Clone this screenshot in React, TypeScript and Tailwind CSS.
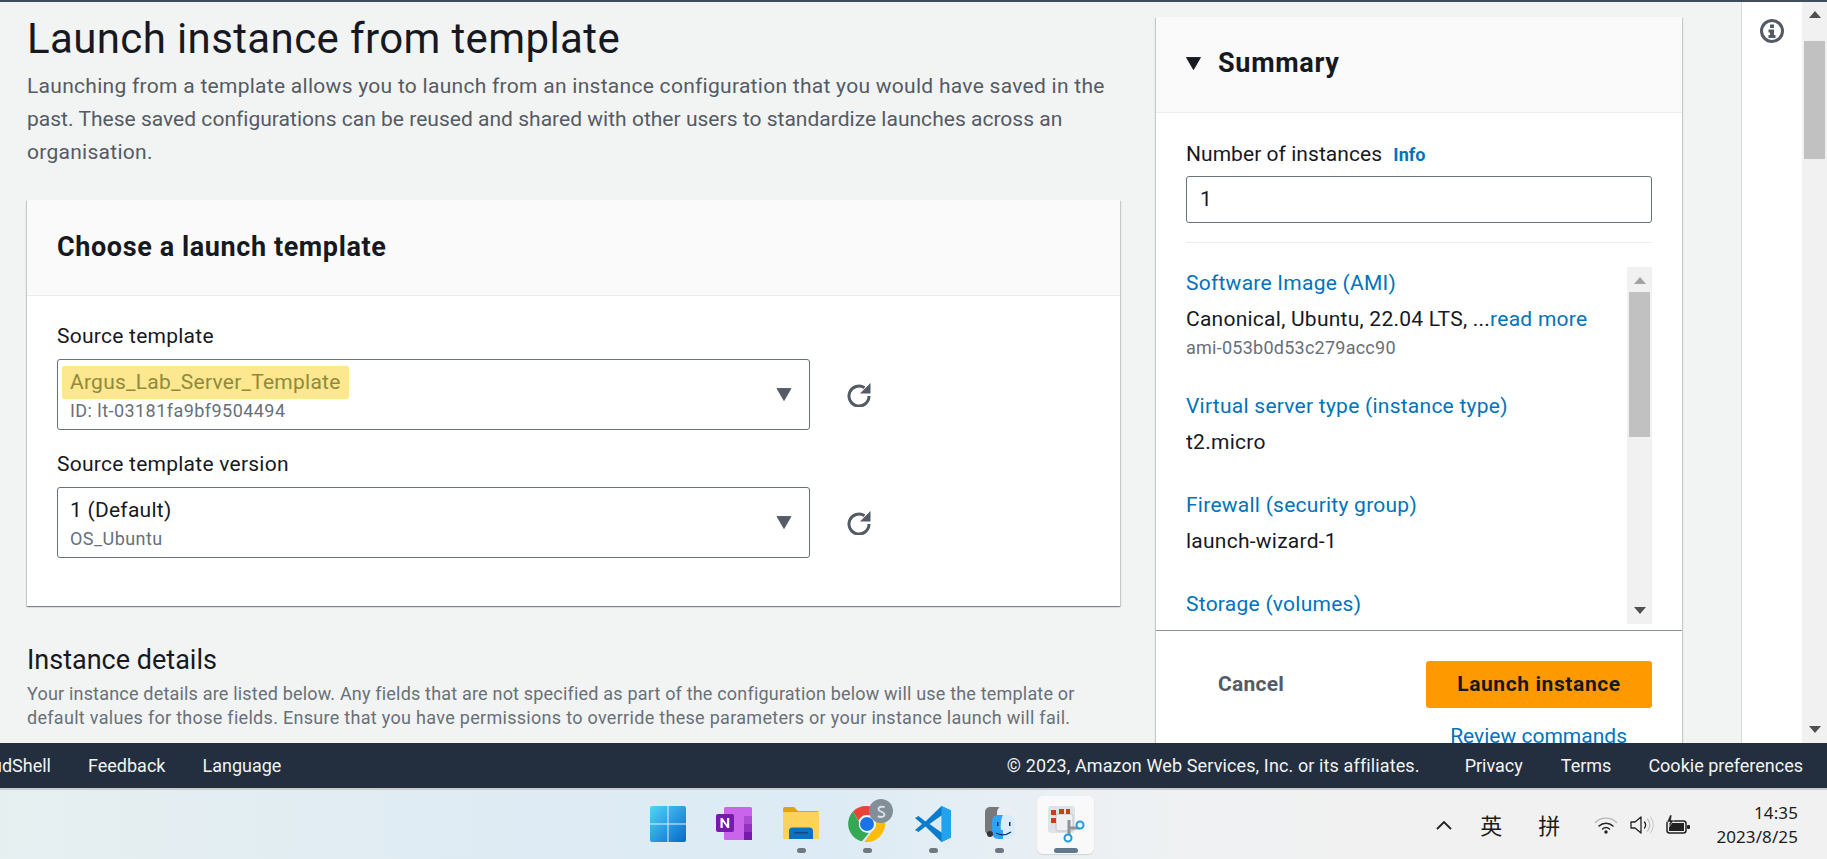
import { ReactNode } from "react";

const ember = "font-['Roboto','Noto_Sans',sans-serif] tracking-[0.25px]";

function Triangle({ className }: { className?: string }) {
  return (
    <svg viewBox="0 0 16 14" className={className}>
      <path d="M0.500 0.500h15L8 13.500z" fill="currentColor" stroke="currentColor" strokeLinejoin="round" />
    </svg>
  );
}

function RefreshIcon() {
  return (
    <svg viewBox="0 0 25 24" className="w-[25px] h-[24px] text-[#545b64]" fill="none" stroke="currentColor" strokeWidth="3">
      <path d="M22 13a10 10 0 1 1-4.500-8.300" />
      <path d="M23.500 0v10.500H13z" fill="currentColor" stroke="none" />
    </svg>
  );
}

function TemplateSelect({ value, sub, marked }: { value: string; sub: string; marked?: boolean }) {
  return (
    <div className="flex items-center">
      <div className="w-[753px] h-[71px] border-[1.5px] border-[#687078] rounded-[3px] bg-white flex items-center pl-[12px] pr-[17px]">
        <div className="flex-1 min-w-0">
          <div className="h-[33px] leading-[33px] text-[21px] text-[#16191f]">
            {marked ? (
              <span className="inline-block -ml-[8px] pl-[8px] pr-[8px] bg-[#fde78f] rounded-[2px] text-[#8f8a3c]">{value}</span>
            ) : (
              value
            )}
          </div>
          <div className="h-[24px] leading-[24px] text-[18px] tracking-[0.45px] text-[#687078]">{sub}</div>
        </div>
        <Triangle className="w-[16px] h-[13px] text-[#545b64]" />
      </div>
      <div className="ml-[37px]">
        <RefreshIcon />
      </div>
    </div>
  );
}

function SummaryItem({ title, value, more, sub }: { title: string; value?: string; more?: string; sub?: string }) {
  return (
    <div className="mb-[30px]">
      <div className="text-[21px] leading-[33px] text-[#0073bb]">{title}</div>
      {value && (
        <div className="mt-[3px] text-[21px] leading-[33px] text-[#16191f]">
          {value}
          {more && <span className="text-[#0073bb]">{more}</span>}
        </div>
      )}
      {sub && <div className="text-[18px] leading-[24px] text-[#687078]">{sub}</div>}
    </div>
  );
}

function ScrollArrow({ dir, className }: { dir: "up" | "down"; className: string }) {
  return (
    <svg viewBox="0 0 12 7" className={`w-[12px] h-[7px] ${className}`}>
      <path d={dir === "up" ? "M6 0l6 7H0z" : "M0 0h12L6 7z"} fill="currentColor" />
    </svg>
  );
}

function TaskbarTile({ children, running, active }: { children: ReactNode; running?: boolean; active?: boolean }) {
  return (
    <div className="w-[66.3px] h-[70px] flex flex-col items-center pt-[16px] relative">
      {active && <div className="absolute left-[4px] top-[6px] w-[57px] h-[58px] rounded-[6px] bg-[#f9f9f9] shadow-[0_1px_1px_rgba(0,0,0,0.12)]" />}
      <div className="relative w-[36px] h-[36px]">{children}</div>
      {running && <div className="absolute left-[29px] top-[58px] w-[9px] h-[5px] rounded-full bg-[#6f7780]" />}
      {active && <div className="absolute left-[21px] top-[58px] w-[24px] h-[5px] rounded-full bg-[#5f7a8e]" />}
    </div>
  );
}

function WindowsLogo() {
  return (
    <svg viewBox="0 0 36 36" className="w-full h-full">
      <defs>
        <linearGradient id="win" x1="0" y1="0" x2="1" y2="1">
          <stop offset="0" stopColor="#52d3fb" />
          <stop offset="1" stopColor="#0669c9" />
        </linearGradient>
      </defs>
      <rect width="36" height="36" rx="2" fill="url(#win)" />
      <path d="M17.500 0h1v36h-1zM0 17.500h36v1H0z" fill="#dff1fa" />
    </svg>
  );
}

function OneNoteLogo() {
  return (
    <svg viewBox="0 0 36 36" className="w-full h-full">
      <rect x="8" y="1" width="28" height="33" rx="1.500" fill="#ca64ea" />
      <rect x="28" y="10" width="8" height="8" fill="#ae4bd5" />
      <rect x="28" y="18" width="8" height="8" fill="#9332bf" />
      <rect x="28" y="26" width="8" height="8" fill="#7719aa" />
      <rect x="0" y="8" width="18" height="18" rx="2" fill="#7719aa" />
      <path d="M4.500 22V12h2l4.500 6.500V12h2.200v10h-2L6.700 15.500V22z" fill="#fff" />
    </svg>
  );
}

function FolderLogo() {
  return (
    <svg viewBox="0 0 36 36" className="w-full h-full">
      <path d="M0 3a2 2 0 0 1 2-2h9l4 4h19a2 2 0 0 1 2 2v6H0z" fill="#e0a50c" />
      <path d="M0 6h36v26a1 1 0 0 1-1 1H1a1 1 0 0 1-1-1z" fill="#fdd258" />
      <path d="M6 33V25a3.500 3.500 0 0 1 3.500-3.500h17A3.500 3.500 0 0 1 30 25v8z" fill="#0a72c4" />
      <rect x="11" y="26" width="14" height="1.500" fill="#0d4a80" />
    </svg>
  );
}

function ChromeLogo() {
  return (
    <svg viewBox="0 0 36 36" className="w-full h-full overflow-visible">
      <path d="M18 0a18 18 0 0 1 15.600 9H18a9 9 0 0 0-8.400 5.800L4 5.500A18 18 0 0 1 18 0z" fill="#ea4335" />
      <path d="M4 5.500l6 10.500a9 9 0 0 0 10 10.800L13 35.300A18 18 0 0 1 4 5.500z" fill="#34a853" />
      <path d="M33.600 9A18 18 0 0 1 15.500 35.800L22.500 26A9 9 0 0 0 25 12.500z" fill="#fbbc04" />
      <circle cx="18" cy="18" r="8" fill="#fff" />
      <circle cx="18" cy="18" r="7" fill="#1a73e8" />
      <circle cx="32" cy="5" r="12" fill="#828f99" />
      <path d="M35.500 1.500c-1-1-5.500-1.500-6 1.500s6 2.500 6 5.500-5 3-6.500 1.500" fill="none" stroke="#dce2e6" strokeWidth="1.800" />
    </svg>
  );
}

function VsCodeLogo() {
  return (
    <svg viewBox="0 0 36 36" className="w-full h-full">
      <path d="M26.500 0L36 4.500v27L26.500 36l-16-15.500-7 5.500L0 24l7-6-7-6 3.500-2 7 5.500z" fill="#0a7ccb" />
      <path d="M26.500 0L36 4.500v27L26.500 36V0z" fill="#21a4f0" />
      <path d="M26.500 9.500v17L14.500 18z" fill="#ffffff" fillOpacity="0.85" />
    </svg>
  );
}

function FinderLogo() {
  return (
    <svg viewBox="0 0 36 36" className="w-full h-full">
      <rect x="3" y="1" width="17" height="28" rx="5" fill="#77787a" />
      <rect x="15" y="1" width="18" height="30" rx="5" fill="#eceef2" />
      <path d="M16 9h5c-1.500 4-2.500 8-2 15h2v9h-5a6 6 0 0 1-6-6V15a6 6 0 0 1 6-6z" fill="#2ea3f7" />
      <path d="M21 9h6a6 6 0 0 1 6 6v12a6 6 0 0 1-6 6h-6v-9h-2c-.5-7 .5-11 2-15z" fill="#d8edfb" />
      <path d="M14 27c4.500 2.500 10 2.500 15-1" fill="none" stroke="#10305e" strokeWidth="1.200" />
      <rect x="15" y="16" width="1.500" height="4" fill="#10305e" />
      <rect x="27" y="16" width="1.500" height="4" fill="#10305e" />
      <circle cx="8" cy="28" r="3" fill="#333" />
    </svg>
  );
}

function SnipLogo() {
  return (
    <svg viewBox="0 0 36 36" className="w-full h-full overflow-visible">
      <rect x="0" y="0" width="27" height="27" rx="3" fill="#dfe2e6" />
      <rect x="8" y="8" width="17" height="17" rx="2" fill="#eef0f2" stroke="#c2c6ca" />
      <path d="M3 4h5v5H3zM11 3h5v5h-5zM18 3h4v5h-4zM3 12h5v5H3z" fill="#c93d1a" />
      <path d="M21 14v16M20 22h12" stroke="#8d949a" strokeWidth="3" fill="none" />
      <circle cx="32" cy="19" r="3.500" fill="#fff" stroke="#1e9be0" strokeWidth="2" />
      <circle cx="20" cy="32" r="3.500" fill="#fff" stroke="#1e9be0" strokeWidth="2" />
    </svg>
  );
}

function WifiIcon() {
  return (
    <svg viewBox="0 0 24 18" className="w-[24px] h-[18px]" fill="none" strokeLinecap="round">
      <path d="M1.500 6.500a15 15 0 0 1 21 0" stroke="#b5b5b5" strokeWidth="1.300" />
      <path d="M5 10a10 10 0 0 1 14 0" stroke="#222" strokeWidth="1.500" />
      <path d="M8.500 13a5.500 5.500 0 0 1 7 0" stroke="#222" strokeWidth="1.500" />
      <circle cx="12" cy="16" r="1.700" fill="#222" />
    </svg>
  );
}

function VolumeIcon() {
  return (
    <svg viewBox="0 0 24 20" className="w-[24px] h-[20px]" fill="none" strokeLinecap="round">
      <path d="M1 7v6h4l6 5V2L5 7z" stroke="#222" strokeWidth="1.300" strokeLinejoin="round" />
      <path d="M14.500 7a5 5 0 0 1 0 6" stroke="#222" strokeWidth="1.300" />
      <path d="M17.500 4a9 9 0 0 1 0 12" stroke="#bbb" strokeWidth="1.200" />
      <path d="M20.500 2a13 13 0 0 1 0 16" stroke="#ccc" strokeWidth="1.200" />
    </svg>
  );
}

function BatteryIcon() {
  return (
    <svg viewBox="0 0 24 20" className="w-[24px] h-[20px]">
      <rect x="1" y="6" width="19" height="12" rx="2.500" fill="none" stroke="#222" strokeWidth="1.500" />
      <rect x="3" y="8" width="15" height="8" fill="#222" />
      <rect x="21" y="10" width="3" height="4" rx="1" fill="#222" />
      <path d="M4 0L1 7h3l-1 5 5-7H5l1-5z" fill="#222" stroke="#f0f0f0" strokeWidth="0.500" />
    </svg>
  );
}

export default function App() {
  return (
    <div className={`w-[1827px] h-[859px] overflow-hidden flex flex-col ${ember}`}>
      <main className="h-[743px] flex overflow-hidden bg-[#f2f3f3] border-t-[2px] border-[#414d5c]">
        <div className="w-[1120px] pl-[27px] shrink-0">
          <h1 className="mt-[10px] text-[42px] leading-[54px] tracking-[0.38px] text-[#16191f]">Launch instance from template</h1>
          <p className="w-[1093px] mt-[4px] text-[21px] leading-[33px] tracking-[0.28px] text-[#545b64]">
            Launching from a template allows you to launch from an instance configuration that you would have saved in
            the{" "}
            <span className="tracking-[0.02px]">
              past. These saved configurations can be reused and shared with other users to standardize launches across an
            </span>{" "}
            organisation.
          </p>
          <section className="mt-[31px] w-[1093px] h-[406px] bg-white shadow-[0_1px_1px_rgba(0,28,36,0.3),1px_1px_1px_rgba(0,28,36,0.15),-1px_1px_1px_rgba(0,28,36,0.15)]">
            <div className="h-[96px] flex items-center pl-[30px] bg-[#fafafa] border-b border-[#eaeded]">
              <h2 className="text-[27px] font-bold tracking-[0.6px] text-[#16191f]">Choose a launch template</h2>
            </div>
            <div className="pl-[30px] pt-[24px]">
              <label className="block h-[39px] text-[21px] leading-[33px] text-[#16191f]">Source template</label>
              <TemplateSelect value="Argus_Lab_Server_Template" sub="ID: lt-03181fa9bf9504494" marked />
              <label className="block mt-[18px] h-[39px] text-[21px] leading-[33px] text-[#16191f]">Source template version</label>
              <TemplateSelect value="1 (Default)" sub="OS_Ubuntu" />
            </div>
          </section>
          <h2 className="mt-[36px] text-[27px] leading-[36px] tracking-normal text-[#16191f]">Instance details</h2>
          <p className="mt-[4px] w-[1093px] text-[18px] leading-[24px] tracking-[0.19px] text-[#687078]">
            Your instance details are listed below. Any fields that are not specified as part of the configuration below
            will use the template or{" "}
            <span className="tracking-[0.3px]">
              default values for those fields. Ensure that you have permissions to override these parameters or your
              instance launch will fail.
            </span>
          </p>
        </div>

        <aside className="ml-[36px] mt-[15px] w-[526px] h-[900px] shrink-0 bg-white shadow-[0_1px_1px_rgba(0,28,36,0.3),1px_1px_1px_rgba(0,28,36,0.15),-1px_1px_1px_rgba(0,28,36,0.15)]">
          <div className="h-[96px] pb-[2px] flex items-center pl-[30px] bg-[#fafafa] border-b border-[#eaeded]">
            <Triangle className="w-[15px] h-[13px] text-[#16191f]" />
            <h2 className="ml-[17px] text-[27px] font-bold tracking-[0.7px] text-[#16191f]">Summary</h2>
          </div>
          <div className="px-[30px]">
            <div className="pt-[25px] h-[63px] text-[21px] leading-[33px] tracking-[0.05px] text-[#16191f]">
              Number of instances <span className="ml-[6px] text-[18px] font-bold text-[#0073bb]">Info</span>
            </div>
            <div className="h-[47px] border-[1.5px] border-[#687078] rounded-[3px] pl-[13px] flex items-center text-[21px] text-[#16191f]">1</div>
            <div className="mt-[19px] h-px bg-[#eaeded]" />
            <div className="mt-[24px] h-[357px] flex overflow-hidden">
              <div className="flex-1 min-w-0">
                <SummaryItem title="Software Image (AMI)" value="Canonical, Ubuntu, 22.04 LTS, ..." more="read more" sub="ami-053b0d53c279acc90" />
                <SummaryItem title="Virtual server type (instance type)" value="t2.micro" />
                <SummaryItem title="Firewall (security group)" value="launch-wizard-1" />
                <SummaryItem title="Storage (volumes)" />
              </div>
              <div className="w-[25px] shrink-0 bg-[#f1f1f1] flex flex-col items-center pt-[10px] pb-[10px]">
                <ScrollArrow dir="up" className="text-[#a3a3a3]" />
                <div className="mt-[8px] w-[21px] h-[145px] bg-[#c1c1c1]" />
                <div className="flex-1" />
                <ScrollArrow dir="down" className="text-[#505050]" />
              </div>
            </div>
          </div>
          <div className="mt-[6px] border-t-[1.5px] border-[#879596] px-[30px]">
            <div className="mt-[30px] flex items-center">
              <span className="ml-[32px] text-[21px] font-bold text-[#545b64]">Cancel</span>
              <button className="ml-auto w-[226px] h-[47px] rounded-[3px] bg-[#ff9900] text-[21px] font-bold tracking-[0.6px] text-[#16191f]">Launch instance</button>
            </div>
            <div className="mt-[12px] pr-[25px] text-right text-[21px] leading-[33px] tracking-normal text-[#0073bb]">Review commands</div>
          </div>
        </aside>

        <div className="ml-[59px] w-[61px] shrink-0 bg-white border-l-[1.5px] border-[#d5dbdb] flex justify-center pt-[17px]">
          <svg viewBox="0 0 24 24" className="w-[24px] h-[24px] text-[#545b64]">
            <circle cx="12" cy="12" r="10.500" fill="none" stroke="currentColor" strokeWidth="3" />
            <rect x="10" y="5.500" width="4" height="3.500" fill="currentColor" />
            <path d="M8.500 10.500h5.500v5.500h1.500v3h-7v-3H10v-2.500H8.500z" fill="currentColor" />
          </svg>
        </div>
        <div className="w-[25px] shrink-0 bg-[#f1f1f1] flex flex-col items-center pt-[9px] pb-[10px]">
          <ScrollArrow dir="up" className="text-[#505050]" />
          <div className="mt-[23px] w-[21px] h-[118px] bg-[#c1c1c1]" />
          <div className="flex-1" />
          <ScrollArrow dir="down" className="text-[#505050]" />
        </div>
      </main>

      <footer className="h-[45px] shrink-0 flex items-center bg-[#232f3e] text-[18px] tracking-normal text-[#f2f3f3]">
        <div className="w-[51px] shrink-0 overflow-hidden flex justify-end whitespace-nowrap">CloudShell</div>
        <span className="ml-[37px]">Feedback</span>
        <span className="ml-[37px]">Language</span>
        <span className="ml-auto tracking-[0.12px]">© 2023, Amazon Web Services, Inc. or its affiliates.</span>
        <span className="ml-[45px]">Privacy</span>
        <span className="ml-[38px]">Terms</span>
        <span className="ml-[37px] mr-[24px]">Cookie preferences</span>
      </footer>

      <div className="h-[71px] shrink-0 flex border-t-[2px] border-[#c9cbcc] bg-[linear-gradient(90deg,#e6eff0_0%,#deebf4_30%,#dcebf5_45%,#eef1f3_62%,#f1f1f1_75%)]">
        <div className="flex pl-[635px]">
          <TaskbarTile><WindowsLogo /></TaskbarTile>
          <TaskbarTile><OneNoteLogo /></TaskbarTile>
          <TaskbarTile running><FolderLogo /></TaskbarTile>
          <TaskbarTile running><ChromeLogo /></TaskbarTile>
          <TaskbarTile running><VsCodeLogo /></TaskbarTile>
          <TaskbarTile running><FinderLogo /></TaskbarTile>
          <TaskbarTile active><SnipLogo /></TaskbarTile>
        </div>
        <div className="ml-auto mr-[29px] flex items-center font-['Noto_Sans','Noto_Sans_CJK_SC',sans-serif] tracking-normal text-[#1c1c1c]">
          <svg viewBox="0 0 16 10" className="w-[16px] h-[10px]" fill="none" stroke="#222" strokeWidth="1.800">
            <path d="M1 9l7-7 7 7" />
          </svg>
          <span className="ml-[28px] text-[22px] font-['Noto_Sans_CJK_SC',sans-serif]">英</span>
          <span className="ml-[36px] text-[22px] font-['Noto_Sans_CJK_SC',sans-serif]">拼</span>
          <div className="ml-[34px]"><WifiIcon /></div>
          <div className="ml-[12px]"><VolumeIcon /></div>
          <div className="ml-[12px]"><BatteryIcon /></div>
          <div className="ml-[26px] text-right text-[17px] leading-[24px] tracking-[0.1px]">
            <div>14:35</div>
            <div>2023/8/25</div>
          </div>
        </div>
      </div>
    </div>
  );
}
